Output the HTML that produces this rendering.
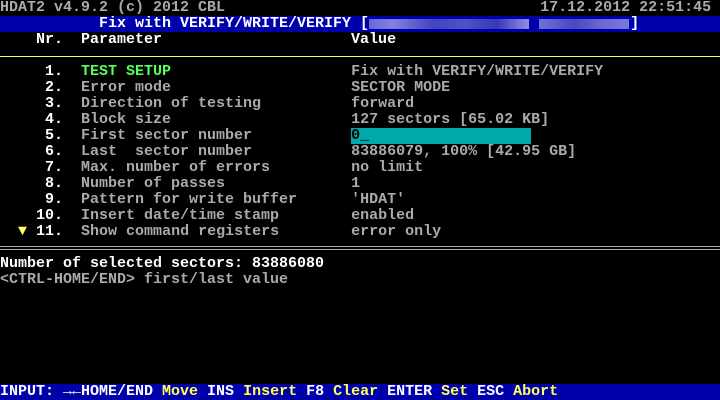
<!DOCTYPE html>
<html><head><meta charset="utf-8"><style>
html,body{margin:0;padding:0;background:#000;width:720px;height:400px;overflow:hidden}
pre{margin:0;font-family:"Liberation Mono","DejaVu Sans Mono",monospace;font-size:15px;font-weight:bold;line-height:16px;color:#aaa;position:absolute;left:0;white-space:pre}
.w{color:#fff}.g{color:#55ff55}.y{color:#ffff55}
.bar{position:absolute;left:0;width:720px;height:16px;background:#0000aa}
</style></head><body>
<div class="bar" style="top:16px"></div>
<div class="bar" style="top:384px"></div>
<div style="position:absolute;left:0;top:56px;width:720px;height:1px;background:#ffff55"></div>
<div style="position:absolute;left:0;top:246px;width:720px;height:1px;background:#aaa"></div>
<div style="position:absolute;left:0;top:249px;width:720px;height:1px;background:#aaa"></div>
<div style="position:absolute;left:351px;top:128px;width:180px;height:16px;background:#00aaaa"></div>
<div style="position:absolute;left:369px;top:16px;height:16px;width:261px;display:flex;align-items:center">
<div style="height:10px;width:160px;background:linear-gradient(90deg,#6a6ad8,#8080e0 15%,#4444c0 40%,#5050c8 60%,#3838b8 80%,#9090e8)"></div>
<div style="width:10px"></div>
<div style="height:10px;width:90px;background:linear-gradient(90deg,#7070d8,#4848c0 40%,#6a6ad0 70%,#7878e0)"></div></div>
<pre style="top:0">HDAT2 v4.9.2 (c) 2012 CBL                                   17.12.2012 22:51:45
<span class="w">           Fix with VERIFY/WRITE/VERIFY [                             ]</span>
<span class="w">    Nr.  Parameter                     Value</span>

<span class="w">     1.</span>  <span class="g">TEST SETUP</span>                    Fix with VERIFY/WRITE/VERIFY
<span class="w">     2.</span>  Error mode                    SECTOR MODE
<span class="w">     3.</span>  Direction of testing          forward
<span class="w">     4.</span>  Block size                    127 sectors [65.02 KB]
<span class="w">     5.</span>  First sector number           <span style="color:#000">0_</span>
<span class="w">     6.</span>  Last  sector number           83886079, 100% [42.95 GB]
<span class="w">     7.</span>  Max. number of errors         no limit
<span class="w">     8.</span>  Number of passes              1
<span class="w">     9.</span>  Pattern for write buffer      'HDAT'
<span class="w">    10.</span>  Insert date/time stamp        enabled
  <span class="y">▼</span><span class="w"> 11.</span>  Show command registers        error only

<span class="w">Number of selected sectors: 83886080</span>
&lt;CTRL-HOME/END&gt; first/last value






<span class="w">INPUT: →←HOME/END <span class="y">Move</span> INS <span class="y">Insert</span> F8 <span class="y">Clear</span> ENTER <span class="y">Set</span> ESC <span class="y">Abort</span></span></pre>
</body></html>
